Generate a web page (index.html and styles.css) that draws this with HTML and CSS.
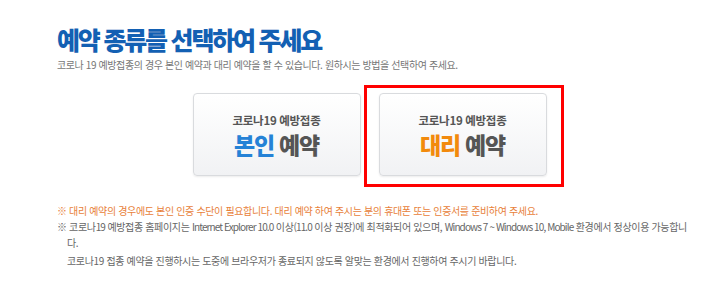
FILE: index.html
```html
<!DOCTYPE html>
<html lang="ko">
<head>
<meta charset="utf-8">
<link rel="stylesheet" href="styles.css">
</head>
<body>
<div class="wrap">
  <h1 class="title">예약 종류를 선택하여 주세요</h1>
  <p class="sub">코로나 19 예방접종의 경우 본인 예약과 대리 예약을 할 수 있습니다. 원하시는 방법을 선택하여 주세요.</p>
  <div class="cards">
    <div class="card">
      <span class="card-top">코로나19 예방접종</span>
      <span class="card-main"><span class="blue">본인</span> 예약</span>
    </div>
    <div class="card selected">
      <span class="card-top">코로나19 예방접종</span>
      <span class="card-main"><span class="orange">대리</span> 예약</span>
      <span class="highlight"></span>
    </div>
  </div>
  <ul class="notes">
    <li class="warn">※ 대리 예약의 경우에도 본인 인증 수단이 필요합니다. 대리 예약 하여 주시는 분의 휴대폰 또는 인증서를 준비하여 주세요.</li>
    <li>※ 코로나<span class="en">19</span> 예방접종 홈페이지는 <span class="en">Internet Explorer 10.0</span> 이상<span class="en">(11.0</span> 이상 권장)에 최적화되어 있으며, <span class="en">Windows 7 ~ Windows 10, Mobile</span> 환경에서 정상이용 가능합니다.</li>
    <li class="plain">코로나19 접종 예약을 진행하시는 도중에 브라우저가 종료되지 않도록 알맞는 환경에서 진행하여 주시기 바랍니다.</li>
  </ul>
</div>
</body>
</html>
```

FILE: styles.css
```css
html, body {
  margin: 0;
  padding: 0;
  background: #fff;
}
body {
  font-family: "Noto Sans CJK KR", "Noto Sans", sans-serif;
}
.wrap {
  width: 630px;
  padding: 24px 0 0 57px;
}
.title {
  margin: 0;
  font-size: 25px;
  line-height: 30px;
  font-weight: 900;
  color: #1360b3;
  letter-spacing: -2.2px;
}
.sub {
  margin: 4px 0 0;
  font-size: 10px;
  line-height: 14px;
  color: #777;
  letter-spacing: -0.4px;
}
.cards {
  display: flex;
  justify-content: center;
  gap: 18px;
  margin: 21px 5px 0 0;
}
.card {
  position: relative;
  width: 166px;
  height: 81px;
  border: 1px solid #d9dbde;
  border-radius: 4px;
  background: linear-gradient(#ffffff, #f1f2f4);
  box-shadow: 0 1px 2px rgba(0,0,0,0.08);
  display: flex;
  flex-direction: column;
  align-items: center;
  justify-content: center;
}
.card-top {
  font-size: 11.5px;
  line-height: 16px;
  font-weight: 700;
  color: #555;
  letter-spacing: -0.3px;
}
.card-main {
  font-size: 23px;
  line-height: 28px;
  font-weight: 900;
  color: #555;
  letter-spacing: -1.2px;
  margin-top: 2px;
}
.blue { color: #2582d6; }
.orange { color: #f28a0c; }
.highlight {
  position: absolute;
  left: -16px;
  top: -9px;
  width: 194px;
  height: 96px;
  border: 3px solid #f00;
}
.notes {
  list-style: none;
  margin: 27px 0 0;
  padding: 0;
  font-size: 10px;
  line-height: 16px;
  color: #666;
  letter-spacing: -0.35px;
}
.notes li {
  padding-left: 10px;
  text-indent: -10px;
}
.notes .en {
  letter-spacing: -0.9px;
}
.notes .warn {
  color: #e8813a;
}
.notes .plain {
  text-indent: 0;
  margin-top: 2px;
}
```
